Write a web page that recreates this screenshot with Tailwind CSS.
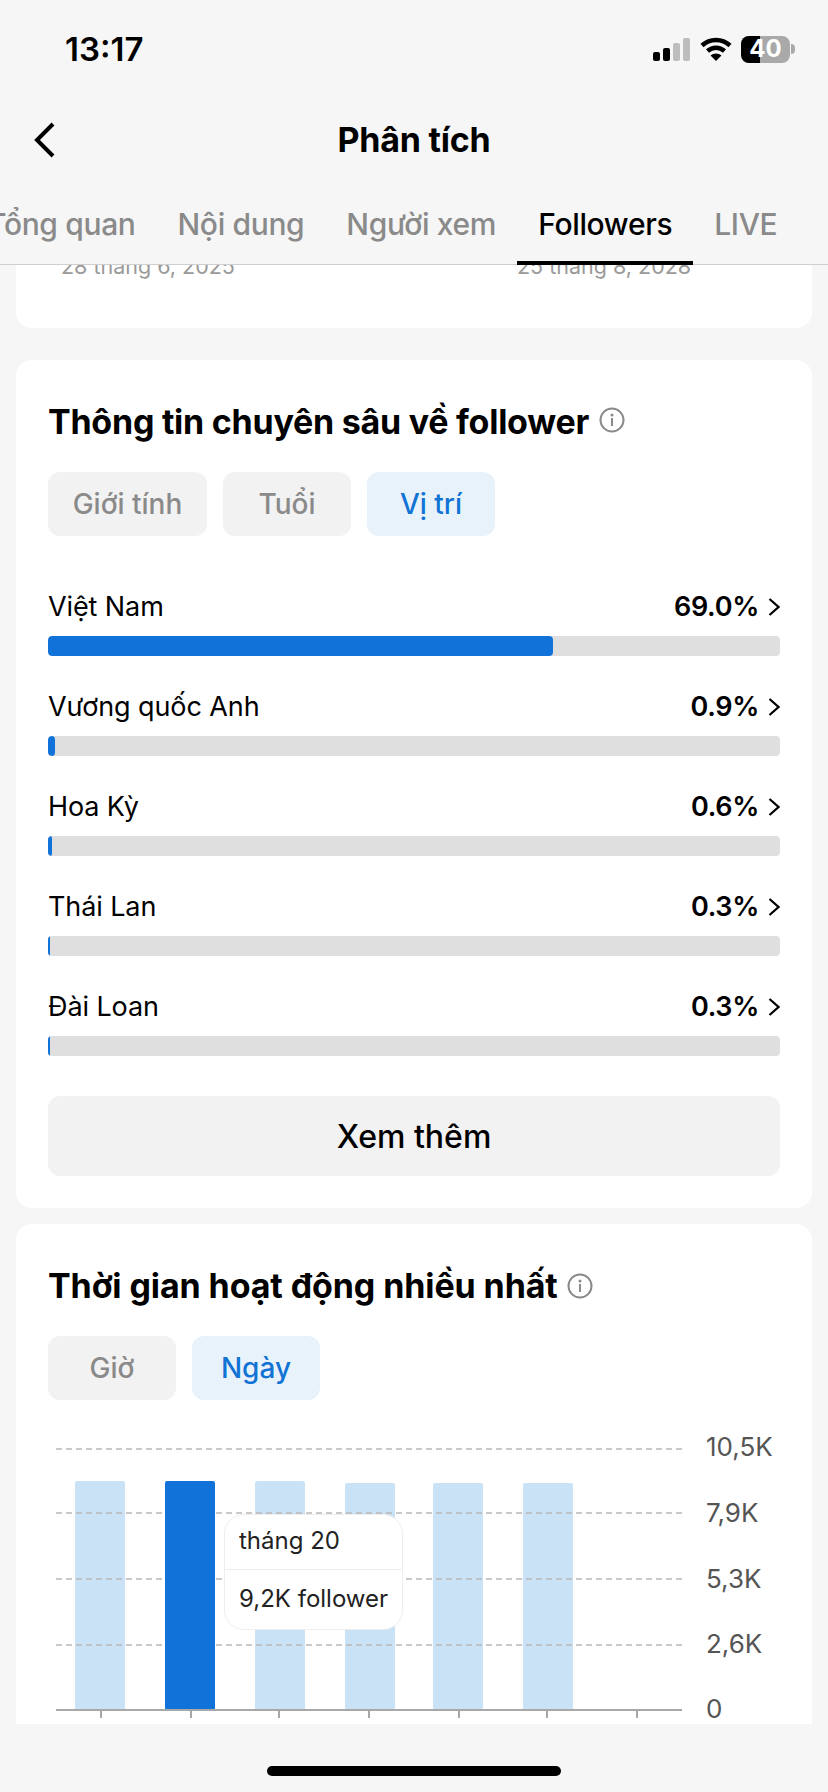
<!DOCTYPE html>
<html lang="vi">
<head>
    <meta charset="UTF-8">
    <meta name="viewport" content="width=device-width, initial-scale=1.0">
    <script src="https://cdn.jsdelivr.net/npm/@tailwindcss/browser@4"></script>
    <title>Phân tích</title>
</head>
<body class="font-['Inter',sans-serif] bg-[#f6f6f6] text-black">
  <div class="w-[828px] h-[1792px] flex flex-col overflow-hidden">
    <!-- status bar -->
    <div class="h-[98px] shrink-0 flex items-center justify-between pl-[65px] pr-[33px]">
      <span class="text-[33px] font-semibold pt-[2px]">13:17</span>
      <div class="flex items-center">
        <svg width="37" height="23" viewBox="0 0 37 23" class="mr-[10px]">
          <rect x="0" y="14" width="7" height="9" rx="2" fill="#000"/>
          <rect x="10" y="10" width="7" height="13" rx="2" fill="#000"/>
          <rect x="20" y="5" width="7" height="18" rx="2" fill="#bdbdbd"/>
          <rect x="30" y="0" width="7" height="23" rx="2" fill="#bdbdbd"/>
        </svg>
        <svg width="32" height="24" viewBox="0 0 32 24" class="mr-[9px]">
          <path d="M2 8.5C10 1 22 1 30 8.5" fill="none" stroke="#000" stroke-width="4.5"/>
          <path d="M7.5 14C12.5 9.5 19.5 9.5 24.5 14" fill="none" stroke="#000" stroke-width="4.5"/>
          <path d="M16 24L10.5 18.5C13.5 15.8 18.5 15.8 21.5 18.5Z" fill="#000"/>
        </svg>
        <div class="relative w-[49px] h-[27px] rounded-[8px] overflow-hidden bg-[#a9a9a9] flex items-center justify-center">
          <div class="absolute left-0 top-0 bottom-0 w-[19px] bg-black"></div>
          <span class="relative text-white text-[24px] font-bold leading-none">40</span>
        </div>
        <div class="w-[4px] h-[10px] ml-[1px] rounded-r-full bg-[#a9a9a9]"></div>
      </div>
    </div>
    <!-- nav -->
    <div class="relative h-[84px] shrink-0 flex items-center justify-center pb-[2px]">
      <svg width="24" height="38" viewBox="0 0 24 38" class="absolute left-[32px] top-[23px]">
        <path d="M21 3L5 19L21 35" fill="none" stroke="#000" stroke-width="4"/>
      </svg>
      <span class="text-[34px] font-bold tracking-[-0.2px]">Phân tích</span>
    </div>
    <!-- tabs -->
    <div class="h-[83px] shrink-0 flex items-stretch border-b border-[#cfcfcf] relative z-10 whitespace-nowrap text-[30px] font-medium text-[#8a8a8a] tracking-[-0.35px] ml-[-34px]">
      <div class="px-[21px] pt-[6px] flex items-center border-b-[4px] border-transparent mb-[-1px]">Tổng quan</div>
      <div class="px-[21px] pt-[6px] flex items-center border-b-[4px] border-transparent mb-[-1px]">Nội dung</div>
      <div class="px-[21px] pt-[6px] flex items-center border-b-[4px] border-transparent mb-[-1px]">Người xem</div>
      <div class="px-[21px] pt-[6px] flex items-center text-black border-b-[4px] border-black mb-[-1px]">Followers</div>
      <div class="px-[21px] pt-[6px] flex items-center border-b-[4px] border-transparent mb-[-1px]">LIVE</div>
    </div>
    <!-- scroll content -->
    <div class="flex-1 overflow-hidden flex flex-col">
      <div class="h-[63px] shrink-0 mx-[16px] bg-white rounded-b-[16px] overflow-hidden">
        <div class="flex text-[#9a9a9a] text-[21.5px] leading-[24px] mt-[-11px] whitespace-nowrap">
          <span class="ml-[45px] w-[456px]">28 tháng 6, 2025</span>
          <span>25 tháng 8, 2028</span>
        </div>
      </div>

      <!-- card follower insights -->
      <div class="mt-[32px] mx-[16px] h-[848px] shrink-0 bg-white rounded-[16px] px-[32px] pt-[42px]">
        <div class="flex items-center">
          <h2 class="text-[34px] leading-[40px] font-bold tracking-[-0.25px]">Thông tin chuyên sâu về follower</h2>
          <svg width="26" height="26" viewBox="0 0 26 26" class="ml-[10px] mb-[4px]">
            <circle cx="13" cy="13" r="11.5" fill="none" stroke="#8a8a8a" stroke-width="2"/>
            <circle cx="13" cy="8" r="1.5" fill="#8a8a8a"/>
            <rect x="12" y="11" width="2" height="8" fill="#8a8a8a"/>
          </svg>
        </div>
        <div class="flex gap-[16px] mt-[30px] text-[28px] font-medium">
          <div class="w-[159px] h-[64px] rounded-[12px] bg-[#f2f2f2] text-[#8a8a8a] flex items-center justify-center">Giới tính</div>
          <div class="w-[128px] h-[64px] rounded-[12px] bg-[#f2f2f2] text-[#8a8a8a] flex items-center justify-center">Tuổi</div>
          <div class="w-[128px] h-[64px] rounded-[12px] bg-[#e8f2fb] text-[#1173d4] flex items-center justify-center">Vị trí</div>
        </div>

        <div class="mt-[53px] flex flex-col gap-[33px]">
          <div>
            <div class="h-[36px] flex items-center justify-between text-[27px] tracking-[-0.1px]">
              <span>Việt Nam</span>
              <span class="flex items-center font-semibold tracking-[-0.3px]">69.0%<svg width="12" height="20" viewBox="0 0 12 20" class="ml-[9px]"><path d="M1.5 2L10.5 10L1.5 18" fill="none" stroke="#000" stroke-width="2.2"/></svg></span>
            </div>
            <div class="h-[20px] mt-[11px] rounded-[4px] bg-[#dfdfdf] overflow-hidden"><div class="h-full rounded-[4px] bg-[#1173d9]" style="width: 505px"></div></div>
          </div>
          <div>
            <div class="h-[36px] flex items-center justify-between text-[27px] tracking-[-0.1px]">
              <span>Vương quốc Anh</span>
              <span class="flex items-center font-semibold tracking-[-0.3px]">0.9%<svg width="12" height="20" viewBox="0 0 12 20" class="ml-[9px]"><path d="M1.5 2L10.5 10L1.5 18" fill="none" stroke="#000" stroke-width="2.2"/></svg></span>
            </div>
            <div class="h-[20px] mt-[11px] rounded-[4px] bg-[#dfdfdf] overflow-hidden"><div class="h-full rounded-[4px] bg-[#1173d9]" style="width: 7px"></div></div>
          </div>
          <div>
            <div class="h-[36px] flex items-center justify-between text-[27px] tracking-[-0.1px]">
              <span>Hoa Kỳ</span>
              <span class="flex items-center font-semibold tracking-[-0.3px]">0.6%<svg width="12" height="20" viewBox="0 0 12 20" class="ml-[9px]"><path d="M1.5 2L10.5 10L1.5 18" fill="none" stroke="#000" stroke-width="2.2"/></svg></span>
            </div>
            <div class="h-[20px] mt-[11px] rounded-[4px] bg-[#dfdfdf] overflow-hidden"><div class="h-full rounded-[2px] bg-[#1173d9]" style="width: 4px"></div></div>
          </div>
          <div>
            <div class="h-[36px] flex items-center justify-between text-[27px] tracking-[-0.1px]">
              <span>Thái Lan</span>
              <span class="flex items-center font-semibold tracking-[-0.3px]">0.3%<svg width="12" height="20" viewBox="0 0 12 20" class="ml-[9px]"><path d="M1.5 2L10.5 10L1.5 18" fill="none" stroke="#000" stroke-width="2.2"/></svg></span>
            </div>
            <div class="h-[20px] mt-[11px] rounded-[4px] bg-[#dfdfdf] overflow-hidden"><div class="h-full bg-[#1173d9]" style="width: 2px"></div></div>
          </div>
          <div>
            <div class="h-[36px] flex items-center justify-between text-[27px] tracking-[-0.1px]">
              <span>Đài Loan</span>
              <span class="flex items-center font-semibold tracking-[-0.3px]">0.3%<svg width="12" height="20" viewBox="0 0 12 20" class="ml-[9px]"><path d="M1.5 2L10.5 10L1.5 18" fill="none" stroke="#000" stroke-width="2.2"/></svg></span>
            </div>
            <div class="h-[20px] mt-[11px] rounded-[4px] bg-[#dfdfdf] overflow-hidden"><div class="h-full bg-[#1173d9]" style="width: 2px"></div></div>
          </div>
        </div>

        <div class="mt-[40px] h-[80px] pt-[2px] rounded-[12px] bg-[#f2f2f2] flex items-center justify-center text-[32px] font-medium">Xem thêm</div>
      </div>

      <!-- card active times -->
      <div class="mt-[16px] mx-[16px] h-[500px] shrink-0 bg-white rounded-t-[16px] px-[32px] pt-[42px]">
        <div class="flex items-center">
          <h2 class="text-[34px] leading-[40px] font-bold tracking-[-0.1px]">Thời gian hoạt động nhiều nhất</h2>
          <svg width="26" height="26" viewBox="0 0 26 26" class="ml-[9px]">
            <circle cx="13" cy="13" r="11.5" fill="none" stroke="#8a8a8a" stroke-width="2"/>
            <circle cx="13" cy="8" r="1.5" fill="#8a8a8a"/>
            <rect x="12" y="11" width="2" height="8" fill="#8a8a8a"/>
          </svg>
        </div>
        <div class="flex gap-[16px] mt-[30px] text-[28px] font-medium">
          <div class="w-[128px] h-[64px] rounded-[12px] bg-[#f2f2f2] text-[#8a8a8a] flex items-center justify-center">Giờ</div>
          <div class="w-[128px] h-[64px] rounded-[12px] bg-[#e8f2fb] text-[#1173d4] flex items-center justify-center">Ngày</div>
        </div>

        <div class="relative mt-[32px] flex">
          <svg width="650" height="292" viewBox="0 0 650 292" class="ml-[8px] shrink-0">
            <rect x="19" y="49" width="50" height="229" rx="2" fill="#c9e2f6"/>
            <rect x="199" y="49" width="50" height="229" rx="2" fill="#c9e2f6"/>
            <rect x="289" y="51" width="50" height="227" rx="2" fill="#c9e2f6"/>
            <rect x="377" y="51" width="50" height="227" rx="2" fill="#c9e2f6"/>
            <rect x="467" y="51" width="50" height="227" rx="2" fill="#c9e2f6"/>
            <g stroke="#b8b8b8" stroke-width="1.5" stroke-dasharray="6 4">
              <line x1="0" y1="17" x2="626" y2="17"/>
              <line x1="0" y1="81" x2="626" y2="81"/>
              <line x1="0" y1="147" x2="626" y2="147"/>
              <line x1="0" y1="213" x2="626" y2="213"/>
            </g>
            <rect x="109" y="49" width="50" height="229" rx="2" fill="#1173d9"/>
            <rect x="0" y="277" width="626" height="2" fill="#a8a8a8"/>
            <g stroke="#8a8a8a" stroke-width="1.5">
              <line x1="45" y1="279" x2="45" y2="286"/>
              <line x1="135" y1="279" x2="135" y2="286"/>
              <line x1="223" y1="279" x2="223" y2="286"/>
              <line x1="313" y1="279" x2="313" y2="286"/>
              <line x1="403" y1="279" x2="403" y2="286"/>
              <line x1="491" y1="279" x2="491" y2="286"/>
              <line x1="581" y1="279" x2="581" y2="286"/>
            </g>
          </svg>
          <div class="absolute left-[658px] top-[-1px] text-[26px] leading-[32px] text-[#555] whitespace-nowrap flex flex-col">
            <span class="h-[66px]">10,5K</span>
            <span class="h-[66px]">7,9K</span>
            <span class="h-[65px]">5,3K</span>
            <span class="h-[65px]">2,6K</span>
            <span>0</span>
          </div>
          <!-- tooltip -->
          <div class="absolute left-[176px] top-[82px] w-[179px] h-[116px] bg-white rounded-[20px] border border-[#eeeeee] text-[24px] text-[#222] px-[14px] flex flex-col">
            <div class="h-[55px] pb-[2px] flex items-center border-b border-[#eeeeee] mx-[-14px] px-[14px]">tháng 20</div>
            <div class="flex-1 pb-[2px] flex items-center whitespace-nowrap">9,2K follower</div>
          </div>
        </div>
      </div>
    </div>
    <!-- home indicator -->
    <div class="absolute left-[267px] top-[1766px] w-[294px] h-[10px] rounded-full bg-black"></div>
  </div>
</body>
</html>
